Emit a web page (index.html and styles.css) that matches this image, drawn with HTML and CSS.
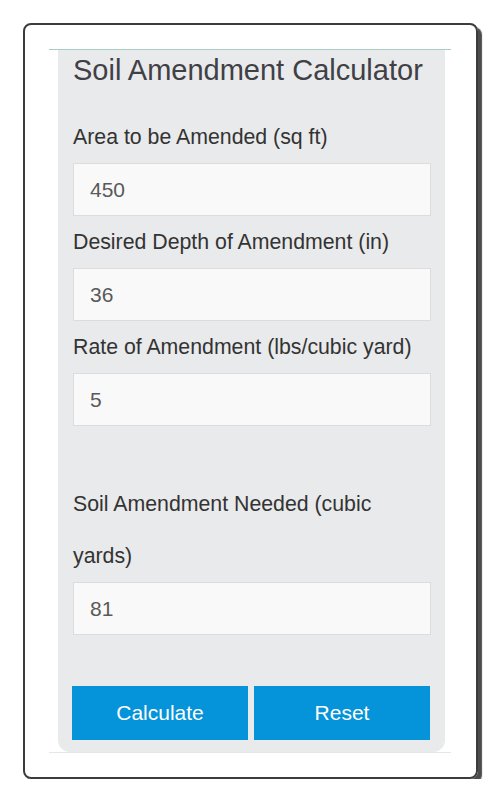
FILE: index.html
```html
<!DOCTYPE html>
<html lang="en">
<head>
    <meta charset="UTF-8">
    <meta name="viewport" content="width=device-width, initial-scale=1.0">
    <title>Soil Amendment Calculator</title>
    <link rel="stylesheet" href="styles.css">
</head>
<body>
    <div class="frame">
        <div class="rule rule-top"></div>
        <form class="calc" onsubmit="return false;">
            <h2 class="calc-title">Soil Amendment Calculator</h2>
            <label for="area">Area to be Amended (sq ft)</label>
            <input type="text" id="area" value="450">
            <label for="depth">Desired Depth of Amendment (in)</label>
            <input type="text" id="depth" value="36">
            <label for="rate">Rate of Amendment (lbs/cubic yard)</label>
            <input type="text" id="rate" value="5">
            <div class="spacer"></div>
            <label for="needed" class="result-label">Soil Amendment Needed (cubic yards)</label>
            <input type="text" id="needed" value="81" readonly>
            <div class="actions">
                <button type="button" id="calc">Calculate</button>
                <button type="button" id="reset">Reset</button>
            </div>
        </form>
        <div class="rule rule-bottom"></div>
    </div>
    <script>
        var area = document.getElementById('area');
        var depth = document.getElementById('depth');
        var rate = document.getElementById('rate');
        var needed = document.getElementById('needed');

        document.getElementById('calc').addEventListener('click', function() {
            // cubic yards = sq ft * (in / 12) / 27
            var yards = area.value * (depth.value / 12) / 27;
            needed.value = Math.round(yards * 100) / 100;
        });

        document.getElementById('reset').addEventListener('click', function() {
            area.value = '';
            depth.value = '';
            rate.value = '';
            needed.value = '';
        });
    </script>
</body>
</html>
```

FILE: styles.css
```css
body {
    margin: 0;
    background-color: #ffffff;
    font-family: 'Liberation Sans', Arial, sans-serif;
}
.frame {
    width: 455px;
    margin: 23px 0 0 23px;
    padding: 24px 25px 24px 24px;
    box-sizing: border-box;
    border: 2px solid #3c3c3c;
    border-radius: 8px;
    box-shadow: 4px 4px 1px rgba(0, 0, 0, 0.7);
}
.rule {
    height: 1px;
}
.rule-top {
    background-color: #a9ccc5;
}
.rule-bottom {
    background-color: #e6e6e6;
}
.calc {
    margin: 0 6px 0 9px;
    padding: 0 14px 12px 15px;
    background-color: #e9eaeb;
    border-radius: 0 0 12px 12px;
}
.calc-title {
    margin: 0 0 21px;
    font-size: 29px;
    font-weight: normal;
    line-height: 40px;
    color: #404046;
}
label {
    display: block;
    font-size: 21.3px;
    line-height: 52px;
    color: #333333;
}
input[type="text"] {
    display: block;
    width: 100%;
    height: 53px;
    padding: 0 16px;
    margin: 0;
    box-sizing: border-box;
    font-family: inherit;
    font-size: 21px;
    color: #5a5a5a;
    background-color: #f9f9f9;
    border: 1px solid #dcdcdc;
    border-radius: 0;
}
.spacer {
    height: 52px;
}
.actions {
    display: flex;
    gap: 6px;
    margin: 51px 1px 0 -1px;
}
.actions button {
    flex: 1;
    height: 54px;
    font-family: inherit;
    font-size: 21px;
    color: #ffffff;
    background-color: #0593d9;
    border: none;
    border-radius: 0;
    cursor: pointer;
}
.actions button:hover {
    background-color: #047bb6;
}
```
